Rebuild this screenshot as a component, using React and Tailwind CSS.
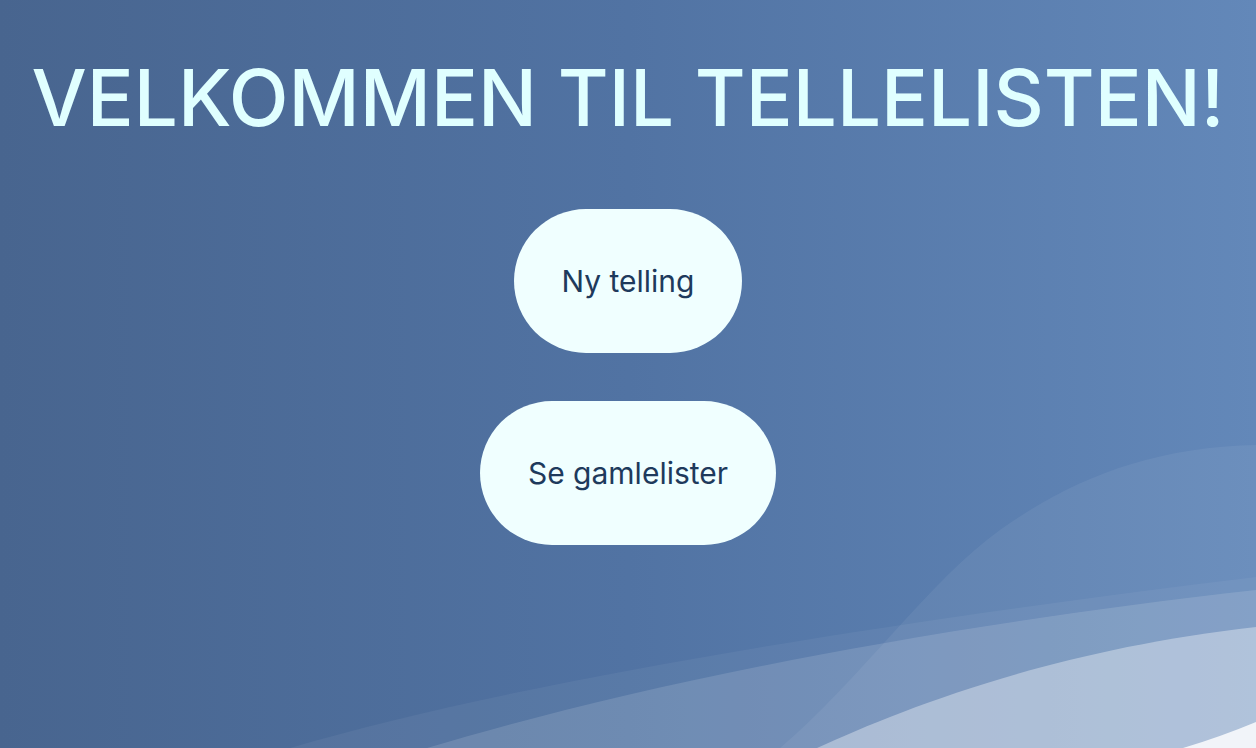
import React from 'react';

const Waves = () => (
    <svg
        className="absolute inset-0 w-full h-full pointer-events-none"
        viewBox="0 0 1256 748"
        preserveAspectRatio="none"
    >
        {/* long low band from the left */}
        <path d="M290 748 C520 680 900 620 1256 577 L1256 748 Z" fill="#ffffff" fillOpacity="0.05" />
        <path d="M427 748 C620 690 900 630 1256 590 L1256 748 Z" fill="#ffffff" fillOpacity="0.13" />
        {/* big rising curve on the right */}
        <path d="M780 748 C860 680 930 580 1000 530 C1070 480 1150 447 1256 445 L1256 748 Z" fill="#ffffff" fillOpacity="0.06" />
        {/* light bands */}
        <path d="M817 748 C900 710 1050 650 1256 627 L1256 748 Z" fill="#ffffff" fillOpacity="0.36" />
        <path d="M1183 748 Q1220 737 1256 722 L1256 748 Z" fill="#ffffff" fillOpacity="0.82" />
    </svg>
);

const App = () => {
    return (
        <div className="relative w-full h-[748px] overflow-hidden bg-gradient-to-r from-[#48658f] via-[#5173a3] to-[#6388b9] font-['Inter','Liberation_Sans',sans-serif]">
            <Waves />
            <div className="relative flex flex-col items-center pt-[51px]">
                <h1 className="text-[78px] leading-[94px] font-medium text-[#e0ffff] whitespace-nowrap">
                    VELKOMMEN TIL TELLELISTEN!
                </h1>
                <div className="flex flex-col items-center gap-12 mt-16">
                    <button className="h-[144px] px-12 rounded-full bg-[#f0ffff] text-[#1e3a5c] text-[30px]">
                        Ny telling
                    </button>
                    <button className="h-[144px] px-12 rounded-full bg-[#f0ffff] text-[#1e3a5c] text-[30px]">
                        Se gamlelister
                    </button>
                </div>
            </div>
        </div>
    );
};

export default App;
